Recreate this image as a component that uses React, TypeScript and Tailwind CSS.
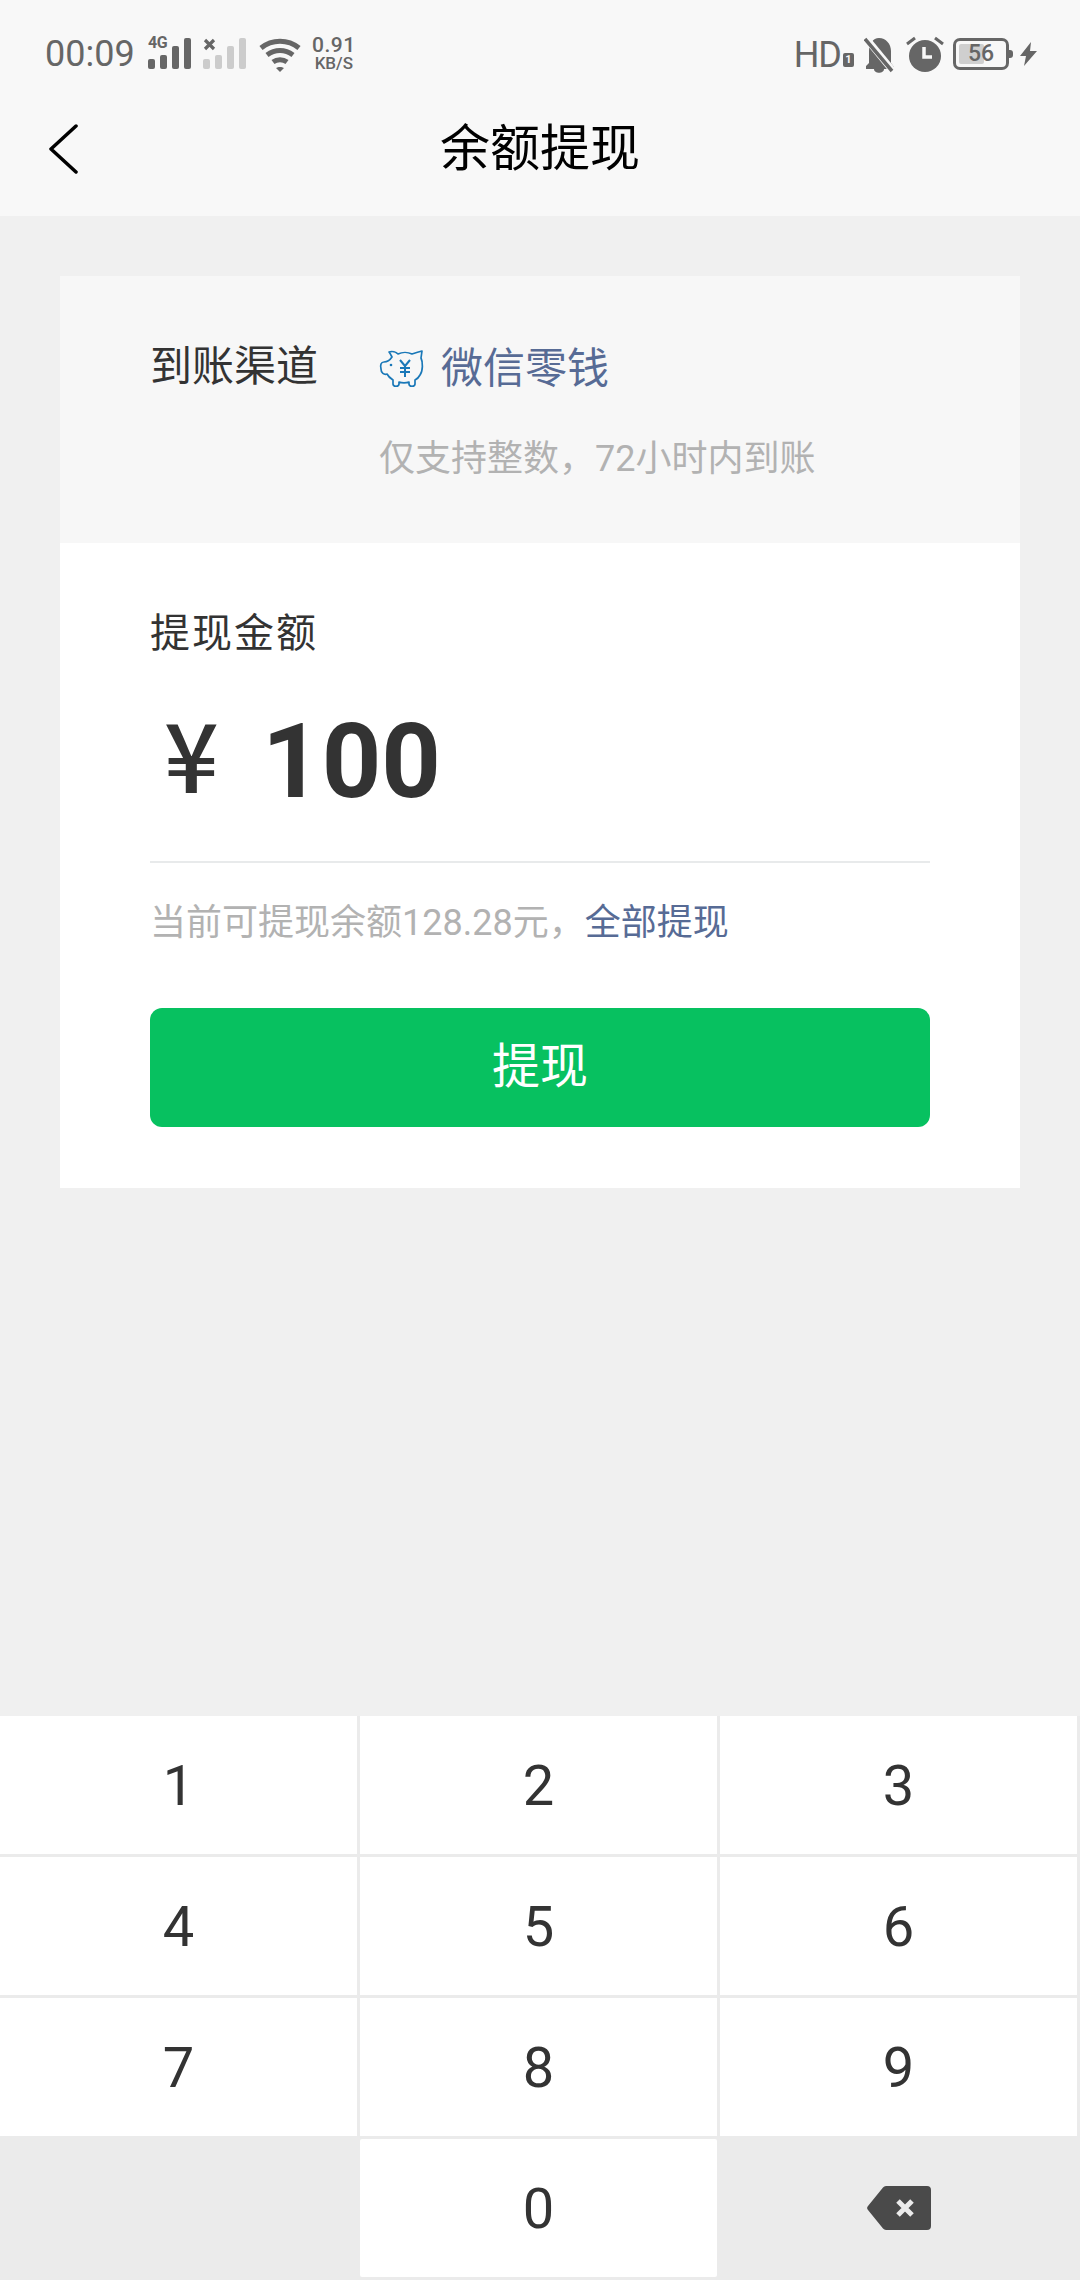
const keys = ["1", "2", "3", "4", "5", "6", "7", "8", "9"];

function SignalBars({ color, mark }: { color: string; mark: "4g" | "x" }) {
  return (
    <div className="relative w-[44px] h-[32px]">
      {mark === "4g" ? (
        <span className="absolute left-0 top-[-3px] text-[16px] leading-[16px] font-bold tracking-[-0.5px]" style={{ color }}>4G</span>
      ) : (
        <svg className="absolute left-0 top-0" width="14" height="14" viewBox="0 0 14 14">
          <path d="M2 2l9 9M11 2l-9 9" stroke="#666" strokeWidth="3.2" />
        </svg>
      )}
      <svg className="absolute left-0 top-0" width="44" height="32" viewBox="0 0 44 32">
        <rect x="0" y="21" width="7" height="10" rx="2" fill={color} />
        <rect x="12" y="17" width="7" height="14" rx="2" fill={color} />
        <rect x="24" y="8" width="7" height="23" rx="2" fill={color} />
        <rect x="36" y="0" width="7" height="31" rx="2" fill={color} />
      </svg>
    </div>
  );
}

function Piggy() {
  return (
    <svg width="46" height="40" viewBox="0 0 46 40" fill="none" stroke="#1a78b8" strokeWidth="1.7" strokeLinejoin="round">
      <path d="M13 8C12 6 11 4 10 3C13 2 17 3 19 5C23 3 29 3 33 5C36 4 39 3 43 2L42 9C44 13 44 22 41 26C40 28 38 30 36 31L36 35C36 38 30 38 30 35L30 33C27 34 23 34 20 33L20 35C20 38 14 38 14 35L14 31C11 29 9 27 8 25C5 26 2 24 2 20C1 16 2 13 5 13C8 13 11 11 13 8z" />
      <path d="M21 11l5 6 5-6M26 17v11M21 19h10M21 23h10" strokeWidth="2" />
      <circle cx="12" cy="16" r="1.3" fill="#1a78b8" stroke="none" />
    </svg>
  );
}

export default function App() {
  return (
    <div className="w-[1080px] h-[2280px] flex flex-col bg-[#f0f0f0] font-['Roboto','Noto_Sans_CJK_SC',sans-serif] overflow-hidden">
      {/* Status bar + title */}
      <div className="h-[216px] bg-[#f8f8f8] flex flex-col">
        <div className="h-[80px] pl-[45px] pr-[43px] pt-[35px] flex justify-between items-start text-[#666666]">
          <div className="flex items-start">
            <span className="text-[36px] leading-[38px] w-[103px]">00:09</span>
            <div className="mt-[3px]"><SignalBars color="#666666" mark="4g" /></div>
            <div className="ml-[11px] mt-[3px]"><SignalBars color="#cccccc" mark="x" /></div>
            <svg className="ml-[11px] mt-[2px]" width="44" height="36" viewBox="0 0 44 36" fill="none" stroke="#666666" strokeWidth="5">
              <path d="M3 11c11-9 27-9 38 0" />
              <path d="M9 18c8-6 18-6 26 0" />
              <path d="M15 25c4-3 10-3 14 0" />
              <path d="M18 31l4 4 4-4c-2-1.500-6-1.500-8 0z" fill="#666666" stroke="none" />
            </svg>
            <div className="ml-[10px] flex flex-col items-center mt-[1px]">
              <span className="text-[21px] leading-[18px] font-medium tracking-[0.5px]">0.91</span>
              <span className="text-[17px] leading-[15px] font-medium mt-[2px]">KB/S</span>
            </div>
          </div>
          <div className="flex items-start">
            <span className="text-[36px] leading-[38px] mt-[1px] tracking-[-1px]">HD</span>
            <span className="w-[11px] h-[14px] mt-[18px] ml-[2px] bg-[#666666] rounded-[2px] text-[#f8f8f8] text-[11px] leading-[14px] text-center font-bold">1</span>
            <svg className="ml-[10px] mt-[2px]" width="30" height="36" viewBox="0 0 30 36">
              <path d="M15 1C22 1 27 7 27 14V26L30 30V32H2V29L5 26V14C5 7 9 1 15 1Z" fill="#666666" />
              <path d="M10 32h10c0 5-10 5-10 0z" fill="#666666" />
              <path d="M1 0L29 34" stroke="#f8f8f8" strokeWidth="7" />
              <path d="M1 2L28 34" stroke="#666666" strokeWidth="3.500" />
            </svg>
            <svg className="ml-[12px]" width="38" height="37" viewBox="0 0 38 37">
              <circle cx="19" cy="21" r="16" fill="#666666" />
              <path d="M1 9l8-6M37 9l-8-6" stroke="#666666" strokeWidth="3" />
              <path d="M18 12v10h8" stroke="#f8f8f8" strokeWidth="3.500" fill="none" />
            </svg>
            <div className="ml-[9px] mt-[3px] w-[56px] h-[32px] border-[3px] border-[#666666] rounded-[7px] p-[3px] relative">
              <div className="h-full w-[56%] bg-[#cfcfcf] rounded-[2px]" />
              <span className="absolute inset-0 text-center text-[23px] leading-[26px] font-medium">56</span>
              <span className="absolute right-[-7px] top-[9px] w-[4px] h-[8px] bg-[#666666] rounded-r-[3px]" />
            </div>
            <svg className="ml-[11px] mt-[7px]" width="17" height="24" viewBox="0 0 17 24">
              <path d="M11 0L0 14h6l-2 10 13-15h-7z" fill="#666666" />
            </svg>
          </div>
        </div>
        <div className="flex-1 grid grid-cols-[1fr_auto_1fr] items-center pl-[49px] pt-[2px]">
          <svg width="30" height="50" viewBox="0 0 30 50" fill="none" stroke="#000" strokeWidth="3.500" strokeLinecap="round" strokeLinejoin="round">
            <path d="M27 2L2 25l25 23" />
          </svg>
          <h1 className="text-[50px] leading-[60px] text-black font-normal pr-[49px]">余额提现</h1>
          <div />
        </div>
      </div>

      {/* Card */}
      <div className="mx-[60px] mt-[60px]">
        <div className="h-[267px] bg-[#f7f7f7] pl-[90px] pt-[62px] flex items-start">
          <span className="w-[229px] text-[42px] leading-[58px] text-[#333333]">到账渠道</span>
          <div className="flex flex-col">
            <div className="flex items-center gap-[16px] mt-[2px]">
              <Piggy />
              <span className="text-[42px] leading-[58px] text-[#576b95]">微信零钱</span>
            </div>
            <span className="mt-[37px] text-[36px] leading-[48px] text-[#b2b2b2]">仅支持整数，72小时内到账</span>
          </div>
        </div>
        <div className="h-[645px] bg-white px-[90px] pt-[61px]">
          <div className="text-[40px] leading-[60px] text-[#333333] tracking-[2px]">提现金额</div>
          <div className="h-[181px] mt-[16px] flex items-center pb-[18px] text-[#333333]">
            <span className="text-[96px] leading-[100px] font-medium ml-[14px] mb-[20px] w-[98px] font-['Noto_Sans_CJK_SC',sans-serif]">¥</span>
            <span className="text-[104px] leading-[120px] font-bold">100</span>
          </div>
          <div className="h-[2px] bg-[#e8eaeb]" />
          <div className="mt-[36px] text-[36px] leading-[48px] text-[#b2b2b2]">
            当前可提现余额128.28元，<span className="text-[#576b95]">全部提现</span>
          </div>
          <button type="button" className="mt-[61px] w-full h-[119px] bg-[#07c160] rounded-[12px] text-white text-[48px] leading-[58px] pb-[2px]">
            提现
          </button>
        </div>
      </div>

      {/* Number pad */}
      <div className="mt-auto bg-[#ebebeb] pr-[3px] pb-[3px] grid grid-cols-3 auto-rows-[138px] gap-[3px]">
        {keys.map((k) => (
          <div key={k} className="bg-white flex items-center justify-center pt-[2px] text-[56px] text-[#333333]">{k}</div>
        ))}
        <div />
        <div className="bg-white rounded-[2px] flex items-center justify-center pt-[2px] text-[56px] text-[#333333]">0</div>
        <div className="flex items-center justify-center">
          <svg width="64" height="44" viewBox="0 0 64 44">
            <path d="M19 0h41a4 4 0 0 1 4 4v36a4 4 0 0 1-4 4H19a4 4 0 0 1-3-1.500L1 24a3 3 0 0 1 0-4L16 1.500A4 4 0 0 1 19 0z" fill="#4a4a4a" />
            <path d="M31 15l14 14M45 15L31 29" stroke="#ebebeb" strokeWidth="5" />
          </svg>
        </div>
      </div>
    </div>
  );
}
